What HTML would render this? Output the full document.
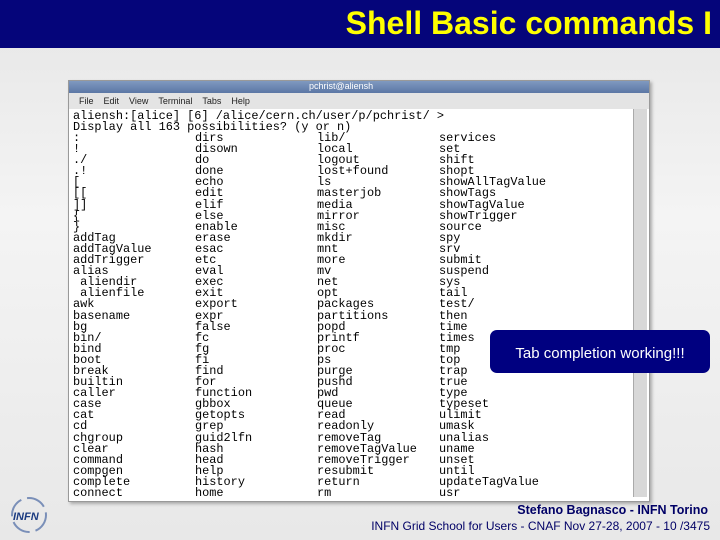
<!DOCTYPE html>
<html><head><style>
body{margin:0;width:720px;height:540px;overflow:hidden;background:linear-gradient(#e6e6e6,#f4f4f4 40%,#e8e8e8);font-family:"Liberation Sans",sans-serif;position:relative}
.hdr{position:absolute;left:0;top:0;width:720px;height:48px;background:#05057a}
.hdr div{position:absolute;right:8px;top:5px;color:#ffff00;font-size:32px;font-weight:bold}
.term{position:absolute;left:68px;top:80px;width:580px;height:420px;background:#fff;border:1px solid #999;box-shadow:2px 2px 3px #aaa}
.tb{position:absolute;left:0;top:0;width:580px;height:12px;background:linear-gradient(#7f99c0,#5b77a5)}
.tb span{position:absolute;left:240px;top:0;font-size:9px;color:#fff}
.mb{position:absolute;left:0;top:12px;width:580px;height:16px;background:#e4e4e4;font-size:9px;color:#222}
.mb span{margin-left:10px;line-height:16px}
.sb{position:absolute;right:2px;top:28px;width:13px;height:388px;background:#d8d8d8;border-left:1px solid #aaa}
.txt{position:absolute;left:4px;top:30px;font-family:"Liberation Mono",monospace;font-size:11.9px;line-height:11.1px;color:#000;white-space:pre}
.col{position:absolute;top:52px;font-family:"Liberation Mono",monospace;font-size:11.9px;line-height:11.1px;white-space:pre}
.tip{position:absolute;left:490px;top:330px;width:220px;height:43px;background:#000080;border-radius:7px;color:#fff;font-size:15px;text-align:center;line-height:47px}
.f1{position:absolute;right:12px;top:503px;color:#000066;font-weight:bold;font-size:12.5px}
.f2{position:absolute;right:10px;top:519px;color:#000066;font-size:12px}
</style></head><body>
<div class="hdr"><div>Shell Basic commands I</div></div>
<div class="term">
<div class="tb"><span>pchrist@aliensh</span></div>
<div class="mb"><span>File</span><span>Edit</span><span>View</span><span>Terminal</span><span>Tabs</span><span>Help</span></div>
<div class="txt">aliensh:[alice] [6] /alice/cern.ch/user/p/pchrist/ >
Display all 163 possibilities? (y or n)</div>
<div class="col" style="left:4px">:
!
./
.!
[
[[
]]
{
}
addTag
addTagValue
addTrigger
alias
 aliendir
 alienfile
awk
basename
bg
bin/
bind
boot
break
builtin
caller
case
cat
cd
chgroup
clear
command
compgen
complete
connect</div>
<div class="col" style="left:126px">dirs
disown
do
done
echo
edit
elif
else
enable
erase
esac
etc
eval
exec
exit
export
expr
false
fc
fg
fi
find
for
function
gbbox
getopts
grep
guid2lfn
hash
head
help
history
home</div>
<div class="col" style="left:248px">lib/
local
logout
lost+found
ls
masterjob
media
mirror
misc
mkdir
mnt
more
mv
net
opt
packages
partitions
popd
printf
proc
ps
purge
pushd
pwd
queue
read
readonly
removeTag
removeTagValue
removeTrigger
resubmit
return
rm</div>
<div class="col" style="left:370px">services
set
shift
shopt
showAllTagValue
showTags
showTagValue
showTrigger
source
spy
srv
submit
suspend
sys
tail
test/
then
time
times
tmp
top
trap
true
type
typeset
ulimit
umask
unalias
uname
unset
until
updateTagValue
usr</div>
<div class="sb"></div>
</div>
<div class="tip">Tab completion working!!!</div>
<svg style="position:absolute;left:8px;top:494px" width="42" height="42"><circle cx="21" cy="21" r="17" fill="none" stroke="#7a8fb8" stroke-width="2" stroke-dasharray="20 6"/><text x="5" y="26" font-family="Liberation Sans" font-weight="bold" font-style="italic" font-size="11" fill="#1a3a80">INFN</text></svg>
<div class="f1">Stefano Bagnasco - INFN Torino</div>
<div class="f2">INFN Grid School for Users - CNAF Nov 27-28, 2007 - 10 /3475</div>
</body></html>
